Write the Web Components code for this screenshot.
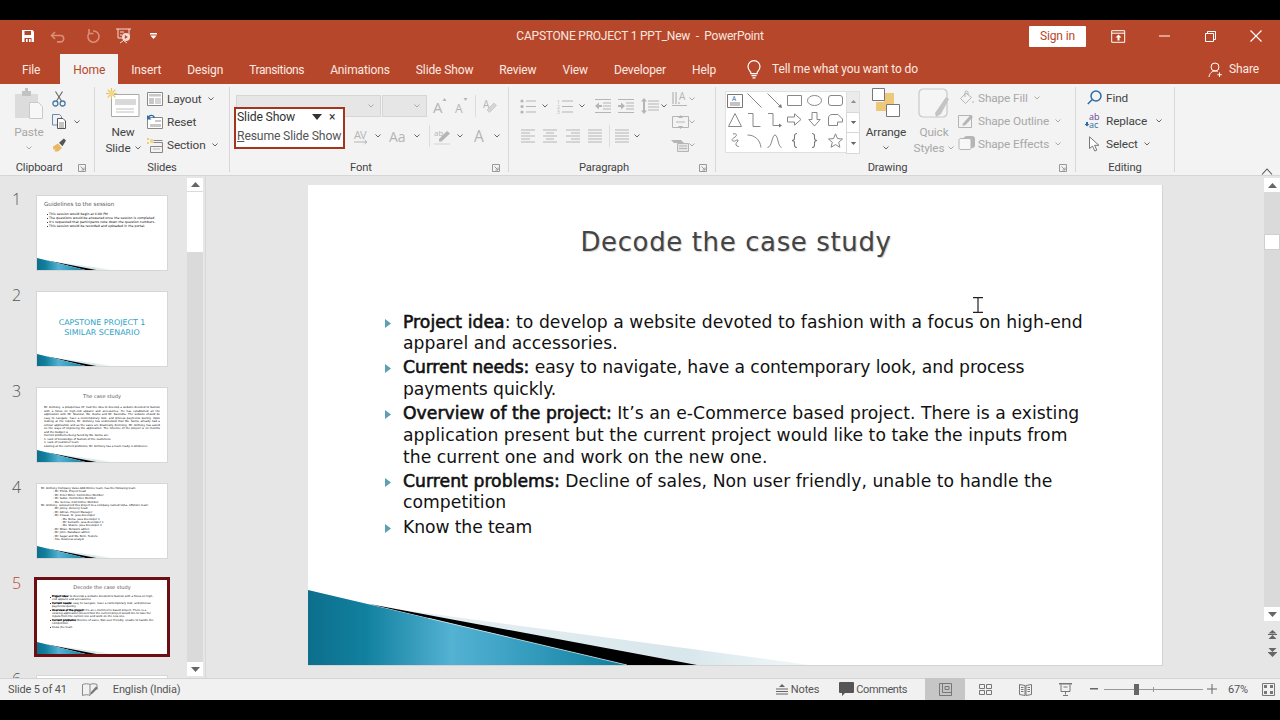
<!DOCTYPE html>
<html lang="en">
<head>
<meta charset="utf-8">
<title>CAPSTONE PROJECT 1 PPT_New - PowerPoint</title>
<style>
  html, body { margin: 0; background: #000; }
</style>
</head>
<body>
<pp-window>
  <pp-titlebar slot="top"></pp-titlebar>
  <pp-tabs slot="top"></pp-tabs>
  <pp-ribbon slot="top">
    <rb-group label="Clipboard" launcher style="width:94px">
      <rb-big icon="paste" line1="Paste" caret disabled style="width:36px;margin-left:11px"></rb-big>
      <rb-col style="margin-left:4px;margin-top:3px">
        <rb-item icon="cut"></rb-item>
        <rb-item icon="copy" caret style="--cg:3px"></rb-item>
        <rb-item icon="painter"></rb-item>
      </rb-col>
    </rb-group>
    <rb-group label="Slides" style="width:134px">
      <rb-big icon="newslide" line1="New" line2="Slide" caret style="width:38px;margin-left:9px"></rb-big>
      <rb-col style="margin-left:5px;margin-top:3px">
        <rb-item icon="layout" caret>Layout</rb-item>
        <rb-item icon="reset">Reset</rb-item>
        <rb-item icon="section" caret>Section</rb-item>
      </rb-col>
    </rb-group>
    <rb-group label="Font" launcher style="width:278px">
      <rb-col style="margin-top:11px;gap:8px">
        <rb-row>
          <rb-select style="width:145px;margin-left:6px"></rb-select>
          <rb-select style="width:45px;margin-left:1px"></rb-select>
          <pp-icon name="grow" style="margin-left:6px"></pp-icon>
          <pp-icon name="shrink" style="margin-left:8px"></pp-icon>
          <rb-sep style="margin-left:6px"></rb-sep>
          <pp-icon name="clearfmt" style="margin-left:6px"></pp-icon>
        </rb-row>
        <rb-row>
          <pp-icon name="spacing" style="margin-left:124px"></pp-icon>
          <pp-icon name="caret" style="margin-left:7px"></pp-icon>
          <pp-icon name="case" style="margin-left:8px"></pp-icon>
          <pp-icon name="caret" style="margin-left:4px"></pp-icon>
          <rb-sep style="margin-left:9px"></rb-sep>
          <pp-icon name="highlight" style="margin-left:3px"></pp-icon>
          <pp-icon name="caret" style="margin-left:6px"></pp-icon>
          <pp-icon name="fontcolor" style="margin-left:10px"></pp-icon>
          <pp-icon name="caret" style="margin-left:7px"></pp-icon>
        </rb-row>
      </rb-col>
      <pp-popup></pp-popup>
    </rb-group>
    <rb-group label="Paragraph" launcher style="width:206px">
      <rb-col style="margin-top:11px;gap:8px;margin-left:11px;width:150px">
        <rb-row>
          <pp-icon name="bullets"></pp-icon>
          <pp-icon name="caret" style="margin-left:6px"></pp-icon>
          <pp-icon name="numbers" style="margin-left:9px"></pp-icon>
          <pp-icon name="caret" style="margin-left:6px"></pp-icon>
          <pp-icon name="outdent" style="margin-left:10px"></pp-icon>
          <pp-icon name="indent" style="margin-left:7px"></pp-icon>
          <pp-icon name="linespace" style="margin-left:7px"></pp-icon>
          <pp-icon name="caret" style="margin-left:2px"></pp-icon>
        </rb-row>
        <rb-row>
          <pp-icon name="alignleft" style="margin-left:1px"></pp-icon>
          <pp-icon name="aligncenter" style="margin-left:8px"></pp-icon>
          <pp-icon name="alignright" style="margin-left:9px"></pp-icon>
          <pp-icon name="justify" style="margin-left:8px"></pp-icon>
          <rb-sep style="margin-left:7px"></rb-sep>
          <pp-icon name="columns" style="margin-left:5px"></pp-icon>
          <pp-icon name="caret" style="margin-left:5px"></pp-icon>
        </rb-row>
      </rb-col>
      <rb-col style="margin-top:3px;margin-left:2px;--cg:-3px">
        <rb-item icon="textdir" caret disabled></rb-item>
        <rb-item icon="aligntext" caret disabled></rb-item>
        <rb-item icon="smartart" caret disabled></rb-item>
      </rb-col>
    </rb-group>
    <rb-group label="Drawing" launcher style="width:359px">
      <rb-gallery style="margin-left:9px;margin-top:7px"></rb-gallery>
      <rb-big icon="arrange" line1="Arrange" caret style="width:50px;margin-left:1px"></rb-big>
      <rb-big icon="quick" line1="Quick" line2="Styles" caret disabled style="width:46px;margin-left:0"></rb-big>
      <rb-col style="margin-left:1px;margin-top:2px">
        <rb-item icon="shapefill" caret disabled>Shape Fill</rb-item>
        <rb-item icon="shapeoutline" caret disabled>Shape Outline</rb-item>
        <rb-item icon="shapeeffects" caret disabled>Shape Effects</rb-item>
      </rb-col>
    </rb-group>
    <rb-group label="Editing" style="width:98px">
      <rb-col style="margin-left:10px;margin-top:2px">
        <rb-item icon="find">Find</rb-item>
        <rb-item icon="replace" caret style="--cg:9px">Replace</rb-item>
        <rb-item icon="select" caret>Select</rb-item>
      </rb-col>
    </rb-group>
  </pp-ribbon>

  <pp-thumbs slot="left">
    <pp-thumb num="1">
      <mini-title style="text-align:left;padding:5px 0 0 7px;font-size:5.6px">Guidelines to the session</mini-title>
      <mini-list style="padding:4px 6px 0 12px;--lh:4px;--fs:3.2px">
        <mini-line>This session would begin at 6:00 PM</mini-line>
        <mini-line>The questions would be answered once the session is completed</mini-line>
        <mini-line>It's requested that participants note down the question numbers.</mini-line>
        <mini-line>This session would be recorded and uploaded in the portal.</mini-line>
      </mini-list>
    </pp-thumb>
    <pp-thumb num="2">
      <mini-heading>CAPSTONE PROJECT 1<br>SIMILAR SCENARIO</mini-heading>
    </pp-thumb>
    <pp-thumb num="3">
      <mini-title style="padding-top:5px;font-size:5px">The case study</mini-title>
      <mini-list style="padding:6px 7px 0 7px;text-align:justify;--dot:none;--lh:3.5px">
        <mini-line>Mr. Anthony, a prosperous VP, had the idea to develop a website devoted to fashion with a focus on high-end apparel and accessories. He has established all the application with Mr. Shankar, Ms. Reshu and Mr. Ravindra. The website should be easy to navigate, have a contemporary look, and process payments quickly. Upon looking at the reports, Mr. Anthony has understood that Ms. Gomu already had a similar application and as the sales are drastically declining, Mr. Anthony has asked on the ways of improving the application. The timeline of the project is 12 months and the budget is</mini-line>
        <mini-line>Current problems being faced by Ms. Gomu are:</mini-line>
        <mini-line>1. Lack of knowledge of fashion of the customers.</mini-line>
        <mini-line>2. Lack of customer team.</mini-line>
        <mini-line>Looking at the current problems, Mr. Anthony has a team ready in Ambience.</mini-line>
      </mini-list>
    </pp-thumb>
    <pp-thumb num="4">
      <mini-list style="padding:3px 6px 0 4px;--dot:none">
        <mini-line>Mr. Anthony Company Value-Add-Online team, has the following team:</mini-line>
        <mini-line style="padding-left:12px">- Mr. Philip- Project head</mini-line>
        <mini-line style="padding-left:12px">- Mr. Peter Miller- Committee Member</mini-line>
        <mini-line style="padding-left:12px">- Mr. Suboi- Committee Member</mini-line>
        <mini-line style="padding-left:12px">- Ms. Serena- Committee Member</mini-line>
        <mini-line>Mr. Anthony, outsourced this project to a company named Usha- offshore team:</mini-line>
        <mini-line style="padding-left:12px">- Mr. Johny- delivery head</mini-line>
        <mini-line style="padding-left:12px">- Mr. Adrian- Project Manager</mini-line>
        <mini-line style="padding-left:12px">- Mr. Chasai- Sr. java developer</mini-line>
        <mini-line style="padding-left:20px">- Ms. Neha- java developer 1</mini-line>
        <mini-line style="padding-left:20px">- Mr. Sumathi- java developer 2</mini-line>
        <mini-line style="padding-left:20px">- Ms. Shalini- java developer 3</mini-line>
        <mini-line style="padding-left:12px">- Mr. Milan- Network admin</mini-line>
        <mini-line style="padding-left:12px">- Mr. John- Database admin</mini-line>
        <mini-line style="padding-left:12px">- Mr. Sagar and Ms. Nehi- Testers</mini-line>
        <mini-line style="padding-left:12px">- You- Business analyst</mini-line>
      </mini-list>
    </pp-thumb>
    <pp-thumb num="5" selected>
      <mini-title style="padding-top:4px;font-size:5px">Decode the case study</mini-title>
      <mini-list style="padding:4px 11px 0 15px">
        <mini-line><b>Project idea:</b> to develop a website devoted to fashion with a focus on high-end apparel and accessories.</mini-line>
        <mini-line><b>Current needs:</b> easy to navigate, have a contemporary look, and process payments quickly.</mini-line>
        <mini-line><b>Overview of the project:</b> It's an e-Commerce based project. There is a existing application present but the current project would like to take the inputs from the current one and work on the new one.</mini-line>
        <mini-line><b>Current problems:</b> Decline of sales, Non user friendly, unable to handle the competition</mini-line>
        <mini-line>Know the team</mini-line>
      </mini-list>
    </pp-thumb>
    <pp-thumb num="6"></pp-thumb>
  </pp-thumbs>

  <pp-editor slot="main">
    <pp-slide>
      <slide-title>Decode the case study</slide-title>
      <slide-bullet><b>Project idea</b>: to develop a website devoted to fashion with a focus on <nobr>high-end</nobr> apparel and accessories.</slide-bullet>
      <slide-bullet style="letter-spacing:-.1px"><b>Current needs:</b> easy to navigate, have a contemporary look, and process payments quickly.</slide-bullet>
      <slide-bullet><b>Overview of the project:</b> It’s an e-Commerce based project. There is a existing application present but the current project would like to take the inputs from the current one and work on the new one.</slide-bullet>
      <slide-bullet><b>Current problems:</b> Decline of sales, Non user friendly, unable to handle the competition</slide-bullet>
      <slide-bullet style="letter-spacing:-.1px">Know the team</slide-bullet>
    </pp-slide>
  </pp-editor>

  <pp-status slot="bottom"></pp-status>
</pp-window>

<script>
const G = "#b5b5b5", D = "#666", B = "#4a7ba6";
const ln = (c, d, w = 1) => `<path fill="none" stroke="${c}" stroke-width="${w}" d="${d}"/>`;
const rows = (c, x, w, ys) => ln(c, ys.map(y => `M${x} ${y}h${w}`).join(""));

// [width, height, svg content]
const ICONS = {
    caret: [6, 4, ln(D, "M.5.5 3 3 5.5.5")],
    caretg: [6, 4, ln("#aaa", "M.5.5 3 3 5.5.5")],
    save: [14, 14, `<path fill="#fff" d="M1 1h10.5L13 2.5V13H1z"/><path fill="#b7472a" d="M3.5 2h6.5v4H3.5zM3.5 9h7v4h-7z"/><path fill="#fff" d="M5 10h1.6v3H5zM8 10h1.6v3H8z"/>`],
    undo: [16, 14, ln("#d98f78", "M1.5 6.5h9a3.2 3.2 0 0 1 0 6.4H7M5 3 1.5 6.5 5 10", 1.6)],
    redo: [14, 16, ln("#d98f78", "M6 3a5.6 5.6 0 1 1-4 2.2M2 1v4.5h4.5", 1.6)],
    qat: [18, 18, ln("#f5dcd3", "M1 2h15M3 2v9h11V2M8.5 11v2.5M5 16l3.5-2.5L12 16M5 5h4M5 8h2") + `<circle cx="11" cy="10" r="4" fill="#f5dcd3"/><path fill="#b7472a" d="M9.8 8v4l3-2z"/>`],
    customize: [7, 6, `<path fill="#fff" d="M0 0h7v1.4H0zM.3 2.6h6.4L3.5 6z"/>`],
    display: [15, 13, ln("#fff", "M.7.7h13v11.6H.7zM.7 3.2h13") + `<path fill="#fff" d="M7.5 4.5 4.5 7.6h2v3h2v-3h2z"/>`],
    min: [11, 2, `<path fill="#fff" d="M0 .5h11v1H0z"/>`],
    restore: [11, 11, ln("#fff", "M.5 2.5h8v8h-8zM2.5 2.5v-2h8v8h-2")],
    close: [12, 12, ln("#fff", "M.5.5l11 11M11.5.5l-11 11", 1.1)],
    bulb: [14, 19, ln("#fff", "M3.8 12.2C2.7 10.7 1 9.4 1 6.6a6 6 0 0 1 12 0c0 2.8-1.7 4.1-2.8 5.6v1.4H3.8zM4.5 15.7h5M5.5 17.8h3", 1.2)],
    person: [15, 15, ln("#fff", "M7 9a4 4 0 1 0 0-8 4 4 0 0 0 0 8zM1 15c.4-3.5 2.9-6 6-6 1 0 1.9.2 2.7.7M11.5 10.5v4.5M9.3 12.7h4.5", 1)],
    paste: [30, 32, `<path fill="#dcdcdc" d="M1 6h23v24H1z"/><path fill="#c2c2c2" d="M8 3h3V0h3v3h3v5H8z"/><path fill="#f7f7f7" stroke="#c9c9c9" d="M15.5 14.5h9l4 4v12h-13z"/>`],
    cut: [14, 16, ln(D, "M3.5 .5 9.5 10M10.5 .5 4.5 10", 1.1) + `<g fill="none" stroke="${B}" stroke-width="1.3"><circle cx="3.4" cy="12.5" r="2.5"/><circle cx="10.6" cy="12.5" r="2.5"/></g>`],
    copy: [14, 15, `<path fill="#eef2f6" stroke="#6d8cab" d="M.5.5h7l2 2v8.5h-9z"/><path fill="#fff" stroke="#555" d="M5.5 4.5h5.5l2.5 2.5v7.5h-8z"/>` + rows("#888", 7, 5, [9, 11, 13])],
    painter: [15, 14, `<path fill="#eab660" d="M1 8.5 6 5.5l4 4.5-4 3.5H2.5L3.5 11 1.5 12z"/><path fill="#555" d="M7 4.8 11.8.5l2.2 2-3.5 5.7z"/>`],
    newslide: [34, 30, `<path fill="#fff" stroke="#a9a9a9" d="M5.5 6.5h27.5v22H5.5z"/><path fill="#d9d9d9" d="M9 11h21v6H9z"/>` + rows("#c0c0c0", 10, 18, [21, 24]) + `<g stroke="#e7c463" stroke-width="1.2">${[0, 45, 90, 135].map(a => `<path transform="rotate(${a} 5.5 5.5)" d="M0 5.5h11"/>`).join("")}</g><circle cx="5.5" cy="5.5" r="2.5" fill="#f3d982"/>`],
    layout: [16, 14, `<path fill="#fff" stroke="#888" d="M.5.5h15v13H.5z"/><path fill="#c8c8c8" d="M2 2h12v2.5H2zM2 6h5v6H2z"/>` + rows("#aaa", 8, 6, [7, 9, 11])],
    reset: [16, 15, `<path fill="#fff" stroke="#888" d="M.5 3.5h15v11H.5z"/><path fill="#c8c8c8" d="M8 6h6v2H8zM3 10h11v3H3z"/>` + ln("#2b6ca8", "M1 3.5C3 .5 6.5 .8 7.5 4", 1.4) + `<path fill="#2b6ca8" d="M0 1v4.5h4.5z"/>`],
    section: [16, 16, `<path fill="#e7c463" d="M0 1h2v2H0zM0 5h2v2H0z" opacity=".8"/><path fill="#f3d982" d="M3 2h3v4H3z"/>` + ln("#888", "M6.5 3.5h9M6.5 5.5h9v10h-12v-6h12") + rows("#bbb", 6, 7, [12])],
    grow: [14, 16, `<text x="0" y="15" font-family="Open Sans" font-size="15" fill="${G}">A</text><path fill="${G}" d="M9.5 3l2-3 2 3z"/>`],
    shrink: [14, 16, `<text x="0" y="15" font-family="Open Sans" font-size="12" fill="${G}">A</text><path fill="${G}" d="M8.5 0h4l-2 3z"/>`],
    clearfmt: [14, 17, `<text x="1" y="10" font-family="Open Sans" font-size="10" fill="${G}">A</text><path fill="#d5d5d5" d="M5 12l7-7 2.5 2.5-7 7z" stroke="${G}" stroke-width=".5"/>`],
    spacing: [14, 16, `<text x="0" y="11" font-family="Open Sans" font-size="11" fill="${G}" letter-spacing="-1">AV</text>` + ln(G, "M0 14h13M10.5 12l2.5 2-2.5 2")],
    case: [21, 16, `<text x="0" y="14" font-family="Open Sans" font-size="14" fill="${G}">Aa</text>`],
    highlight: [18, 17, `<text x="1" y="8" font-family="Open Sans" font-size="8" fill="${G}">ab</text><path fill="${G}" d="M6 11 14 3l3 2.5-8.5 8H6z"/><path fill="#e3e3e3" d="M1 15h16v2H1z"/>`],
    fontcolor: [14, 16, `<text x="1" y="14" font-family="Open Sans" font-size="15.5" fill="${G}">A</text>`],
    bullets: [16, 15, `<g fill="${G}"><circle cx="2" cy="2" r="1.6"/><circle cx="2" cy="7.5" r="1.6"/><circle cx="2" cy="13" r="1.6"/></g>` + rows(G, 6, 10, [2, 7.5, 13])],
    numbers: [16, 15, `<g font-family="Open Sans" font-size="5" fill="${G}"><text y="5">1</text><text y="10">2</text><text y="15">3</text></g>` + rows(G, 5, 11, [2, 7.5, 13])],
    outdent: [16, 14, rows(G, 0, 16, [.5, 13.5]) + rows(G, 8, 8, [4, 7, 10]) + `<path fill="${G}" d="M0 7l4-3.5V6h3v2H4v2.5z"/>`],
    indent: [16, 14, rows(G, 0, 16, [.5, 13.5]) + rows(G, 8, 8, [4, 7, 10]) + `<path fill="${G}" d="M7 7 3 3.5V6H0v2h3v2.5z"/>`],
    linespace: [18, 16, rows(G, 7, 11, [3, 6, 9, 12]) + `<path fill="${G}" d="M3 0l3 3.5H4v9h2L3 16 0 12.5h2v-9H0z"/>`],
    alignleft: [14, 15, rows(G, 0, 14, [1, 7, 13]) + rows(G, 0, 9, [4, 10])],
    aligncenter: [14, 15, rows(G, 0, 14, [1, 7, 13]) + rows(G, 3, 8, [4, 10])],
    alignright: [14, 15, rows(G, 0, 14, [1, 7, 13]) + rows(G, 5, 9, [4, 10])],
    justify: [14, 15, rows(G, 0, 14, [1, 4, 7, 10, 13])],
    columns: [14, 15, rows(G, 0, 14, [1, 4, 7, 10, 13])],
    textdir: [18, 16, `<text x="8" y="9" font-family="Open Sans" font-size="10" fill="${G}">A</text>` + ln(G, "M2 1v12M5 1v12M8 11v2M1 14.5h15", 1.2)],
    aligntext: [17, 14, ln(G, "M.5 1.5h16v11H.5z", 1) + `<path fill="${G}" d="M8.5 0 6 3h5zM8.5 14 6 11h5z"/>` + rows(G, 4, 9, [7])],
    smartart: [18, 14, `<path fill="${G}" d="M0 2h10l3 3H3z"/><path fill="#e6e6e6" stroke="${G}" d="M6.5 5.5h11v8h-11z"/>` + rows(G, 8, 8, [8, 10.5])],
    arrange: [28, 29, `<path fill="#ecc878" d="M12 5h10v11H12zM4 14h10v9H4z"/><path fill="#fff" stroke="#777" d="M.5.5h12v12H.5zM14.5 16.5h13v12h-13z"/>`],
    quick: [32, 32, `<path fill="#f5f5f5" stroke="#c8c8c8" stroke-width="1.2" d="M5 1h20c2 0 4 2 4 4v20c0 2-2 4-4 4H5c-2 0-4-2-4-4V5c0-2 2-4 4-4z"/><path fill="#c4c4c4" d="M17 25l11-16 3 2-8 15-5 3z"/>`],
    shapefill: [15, 15, `<path fill="none" stroke="${G}" d="M7 3 1.5 8.5l5 5 6-6z"/><path fill="none" stroke="${G}" d="M6 7V2.5a1.5 1.5 0 0 1 3 0V5"/><circle cx="14" cy="12" r="1" fill="#ccc"/>`],
    shapeoutline: [16, 15, `<path fill="none" stroke="${G}" d="M.5 2.5h13v12H.5z"/><path fill="${G}" d="M5 10.5 12.5 2 15 4 7.5 12l-3 1z"/>`],
    shapeeffects: [17, 15, `<path fill="${G}" d="M5 3c1-2 2-3 4-3h5c2 0 3 1 3 3v6c0 2-1 3-3 3H9z"/><path fill="#f7f7f7" stroke="${G}" d="M3 2.5h8c1.5 0 2 .5 2 2v7c0 1.5-.5 2-2 2H3c-1.5 0-2-.5-2-2v-7c0-1.5.5-2 2-2z"/>`],
    find: [15, 15, ln("#2b6ca8", "M9 1a5 5 0 1 1 0 10A5 5 0 0 1 9 1zM5.3 9.5 .8 14", 1.5)],
    replace: [16, 15, `<text x="3" y="7" font-family="Open Sans" font-size="9" fill="#6a3d9a">ab</text><text x="3" y="15" font-family="Open Sans" font-size="9" fill="#2b6ca8">ac</text><path fill="#2b6ca8" d="M0 9h2v2h1.5L1 13.5-1.5 11H0z"/>`],
    select: [13, 16, `<path fill="#fff" stroke="#777" d="M1.5 .8v11.7l3-2.4 2.3 4.9 2-.9-2.2-4.8h4.3z"/>`],
    launcher: [8, 8, ln("#999", "M.5.5h7v7h-7zM2.5 2.5l3.5 3.5M6 3.5V6H3.5")],
    collapse: [12, 7, ln("#555", "M1 6.5 6 1l5 5.5", 1.1)],
    up: [9, 5, `<path fill="${D}" d="M4.5 0 9 5H0z"/>`],
    down: [9, 5, `<path fill="${D}" d="M4.5 5 9 0H0z"/>`],
    prevslide: [9, 9, `<path fill="${D}" d="M4.5 0 8.5 3.5H.5zM0 4h9v1H0zM4.5 5l4 4h-8z"/>`],
    nextslide: [9, 9, `<path fill="${D}" d="M4.5 4 .5 0h8zM0 4h9v1H0zM4.5 9l-4-4h8z"/>`],
    proof: [16, 13, ln("#888", "M8 1.5C6.5 .5 3 .5 .5 1.5v11C3 11.5 6.5 11.5 8 12.5zM8 1.5c1.5-1 4.5-1 7 0v5") + `<path fill="#777" d="M8 12l1-3 5-5.5 2 1.5-5.5 5.5z"/>`],
    notes: [12, 11, `<path fill="${D}" d="M6 0 9 3H3z"/>` + rows(D, 0, 12, [5, 7.5, 10])],
    comments: [15, 14, `<path fill="#555" d="M1 0h13a1 1 0 0 1 1 1v9a1 1 0 0 1-1 1H6l-3 3v-3H1a1 1 0 0 1-1-1V1a1 1 0 0 1 1-1z"/>`],
    normal: [13, 13, ln("#777", "M.5.5h12v12H.5zM3.5 .5v9M3.5 9.5h9M6 3.5h4v3H6z")],
    sorter: [13, 13, ln("#777", "M.5 1.5h5v4h-5zM7.5 1.5h5v4h-5zM.5 7.5h5v4h-5zM7.5 7.5h5v4h-5z")],
    reading: [13, 13, ln("#777", "M.5 1.5l5.5 1v10l-5.5-1zM12.5 1.5l-5.5 1v10l5.5-1zM2 4.5h2.5M2 6.5h2.5M2 8.5h2.5M8.5 4.5H11M8.5 6.5H11M8.5 8.5H11")],
    show: [13, 13, `<path fill="#777" d="M0 0h13v1.5H0z"/>` + ln("#777", "M2 1.5v7h9v-7M6.5 8.5v3M4 12.5h5M4.5 4h4")],
    zminus: [8, 2, `<path fill="${D}" d="M0 0h8v1.5H0z"/>`],
    zplus: [10, 10, ln(D, "M0 5h10M5 0v10")],
    fit: [13, 13, ln("#777", "M.5.5h12v12H.5z") + `<path fill="#777" d="M2 2h3v3H2zM8 2h3v3H8zM2 8h3v3H2zM8 8h3v3H8z"/>`],
    ibeam: [10, 16, ln("#222", "M0 .7h10M5 .7v14.6M0 15.3h10", 1.2)],
    tri: [6, 9, `<path fill="#5f9fb6" d="M0 0 6 4.5 0 9z"/>`],
    // drawing gallery
    textbox: [16, 14, `<path fill="#fff" stroke="#777" d="M.5.5h15v13H.5z"/><text x="5" y="7" font-family="Open Sans" font-size="6.5" fill="#2b6ca8">A</text>` + rows("#888", 3, 10, [9, 11])],
    line: [15, 15, ln("#888", "M.5.5l14 14")],
    arrow: [15, 15, ln("#888", "M.5.5l13 13") + `<path fill="#777" d="M15 15l-4-1 3-3z"/>`],
    rect: [15, 11, ln("#888", "M.5.5h14v10H.5z")],
    oval: [15, 11, `<ellipse cx="7.5" cy="5.5" rx="7" ry="5" fill="none" stroke="#888"/>`],
    rrect: [15, 11, `<rect x=".5" y=".5" width="14" height="10" rx="2.5" fill="none" stroke="#888"/>`],
    triangle: [14, 14, ln("#888", "M7 .5l6.5 13H.5z")],
    elbow: [14, 14, ln("#888", "M1 .5h5v13h7.5")],
    elbowa: [15, 14, ln("#888", "M1 .5h5v12h6") + `<path fill="#777" d="M15 12.5l-3-2v4z"/>`],
    rarrow: [15, 13, ln("#888", "M.5 4h7V.8l6.5 5.7-6.5 5.7V9h-7z")],
    darrow: [13, 15, ln("#888", "M4 .5v7H.8l5.7 6.5 5.7-6.5H9v-7z")],
    snip: [15, 12, ln("#888", "M.5 11.5V4C.5 2 2 .5 4 .5h6l4.5 4.5v3h-5v3.5z")],
    scribble: [11, 15, ln("#888", "M3 1c3-1 5 1 2 3S1 7 3 8s4-2 5-1-3 3-2 5 3 1 3 2")],
    curve: [15, 14, ln("#888", "M.5 1C7 1 13 5 14 13.5")],
    scurve: [15, 14, ln("#888", "M.5 13.5C5 13 5 1 8 1s3 12 6.5 12.5")],
    lbrace: [7, 15, ln("#777", "M6 .5C3 .5 3.5 3 3.5 5S3 7.5 1 7.5c2 0 2.5 .5 2.5 2.5S3 14.5 6 14.5", 1.1)],
    rbrace: [7, 15, ln("#777", "M1 .5C4 .5 3.5 3 3.5 5S4 7.5 6 7.5c-2 0-2.5 .5-2.5 2.5S4 14.5 1 14.5", 1.1)],
    star: [15, 15, ln("#888", "M7.5 .8l2 4.8 5 .4-3.8 3.3 1.2 5-4.4-2.7-4.4 2.7 1.2-5L.5 6l5-.4z")],
};

// attach a shadow root holding the given markup
const shadow = (el, html) => {
    el.attachShadow({ mode: "open" }).innerHTML = html;
};
const define = (tag, css, html = "<slot></slot>") => {
    customElements.define(tag, class extends HTMLElement {
        constructor() {
            super();
            shadow(this, `<style>${css}</style>${typeof html === "function" ? html(this) : html}`);
        }
    });
};

class PpIcon extends HTMLElement {
    connectedCallback() {
        const [w, h, body] = ICONS[this.getAttribute("name")];
        this.shadowRoot || this.attachShadow({ mode: "open" });
        this.shadowRoot.innerHTML = `<style>:host{display:inline-flex;flex:none;line-height:0;letter-spacing:0}svg{overflow:visible}</style>
            <svg width="${w}" height="${h}" viewBox="0 0 ${w} ${h}">${body}</svg>`;
    }
}
customElements.define("pp-icon", PpIcon);

define("pp-window", `
    :host { display: flex; flex-direction: column; width: 1280px; height: 720px; padding: 20px 0; box-sizing: border-box;
        background: #000; overflow: hidden; font: 12px Roboto, "Open Sans", sans-serif; letter-spacing: -.12px; color: #444; }
    .mid { flex: 1; display: flex; min-height: 0; background: #e6e6e6; }
`, `<slot name="top"></slot><div class="mid"><slot name="left"></slot><slot name="main"></slot></div><slot name="bottom"></slot>`);

define("pp-titlebar", `
    :host { display: flex; align-items: center; height: 32px; background: #b7472a; color: #f8e7e0; position: relative; }
    .qat { display: flex; align-items: center; padding-left: 21px; width: 480px; }
    .title { position: absolute; left: 0; right: 0; top: 9px; text-align: center; margin-left: 0; letter-spacing: -.22px; }
    .sign { margin-left: auto; width: 57px; height: 21px; background: #fff; color: #b7472a; display: flex; align-items: center; justify-content: center; border-radius: 1px; }
    .win { display: flex; align-items: center; width: 185px; margin-left: 9px; }
    .win span { width: 46px; display: flex; justify-content: center; }
`, `
    <div class="qat">
        <pp-icon name="save"></pp-icon>
        <pp-icon name="undo" style="margin-left:15px"></pp-icon>
        <pp-icon name="caret" style="margin-left:4px;opacity:.5"></pp-icon>
        <pp-icon name="redo" style="margin-left:11px"></pp-icon>
        <pp-icon name="qat" style="margin-left:14px"></pp-icon>
        <pp-icon name="customize" style="margin-left:17px"></pp-icon>
    </div>
    <div class="title">CAPSTONE PROJECT 1 PPT_New &nbsp;-&nbsp; PowerPoint</div>
    <div class="sign">Sign in</div>
    <div class="win">
        <span><pp-icon name="display"></pp-icon></span>
        <span><pp-icon name="min"></pp-icon></span>
        <span><pp-icon name="restore"></pp-icon></span>
        <span><pp-icon name="close"></pp-icon></span>
    </div>
`);

define("pp-tabs", `
    :host { display: flex; align-items: stretch; height: 32px; background: #b7472a; color: #fbeae3; padding-left: 9px; }
    .t { display: flex; align-items: center; padding: 3px 13px 0; }
    .on { background: #f3f3f3; color: #b7472a; margin: 2px 0 0 7px; padding-top: 1px; }
    .tell { display: flex; align-items: center; margin-left: 18px; gap: 11px; padding-top: 2px; }
    .share { margin-left: auto; display: flex; align-items: center; gap: 6px; padding: 2px 21px 0 0; }
`, `
    <div class="t">File</div><div class="t on">Home</div><div class="t">Insert</div><div class="t">Design</div>
    <div class="t" style="letter-spacing:-.4px">Transitions</div><div class="t">Animations</div><div class="t">Slide Show</div><div class="t">Review</div>
    <div class="t">View</div><div class="t">Developer</div><div class="t">Help</div>
    <div class="tell"><pp-icon name="bulb"></pp-icon><span>Tell me what you want to do</span></div>
    <div class="share"><pp-icon name="person"></pp-icon><span>Share</span></div>
`);

define("pp-ribbon", `
    :host { display: flex; height: 92px; box-sizing: border-box; background: #f3f3f3; border-bottom: 1px solid #d6d6d6; position: relative; font-size: 11.8px; }
    .up { margin: 80px 0 0 auto; padding-right: 7px; height: 7px; }
`, `<slot></slot><div class="up"><pp-icon name="collapse"></pp-icon></div>`);

class RbGroup extends HTMLElement {
    constructor() {
        super();
        const launcher = this.hasAttribute("launcher");
        shadow(this, `<style>
            :host { display: flex; flex-direction: column; flex: none; position: relative; box-sizing: content-box; margin-right: 1px; }
            :host::after { content: ""; position: absolute; right: -1px; top: 3px; bottom: 3px; width: 1px; background: #d8d8d8; }
            .body { flex: 1; display: flex; align-items: flex-start; min-height: 0; }
            .foot { height: 16px; display: flex; align-items: center; padding-top: 1px; box-sizing: border-box; }
            .label { flex: 1; text-align: center; font-size: 11.2px; }
            .launch { width: 16px; display: flex; }
        </style>
        <div class="body"><slot></slot></div>
        <div class="foot"><div class="label">${this.getAttribute("label")}</div>
        ${launcher ? `<div class="launch"><pp-icon name="launcher"></pp-icon></div>` : ""}</div>`);
    }
}
customElements.define("rb-group", RbGroup);

define("rb-col", `:host { display: flex; flex-direction: column; flex: none; }`);
define("rb-row", `:host { display: flex; align-items: center; height: 22px; }`);
define("rb-sep", `:host { display: block; width: 1px; height: 22px; background: #dcdcdc; flex: none; }`);
define("rb-select", `
    :host { display: flex; align-items: center; justify-content: flex-end; height: 22px; box-sizing: border-box; padding-right: 6px;
        background: #e6e6e6; border: 1px solid #d6d6d6; flex: none; }
`, `<pp-icon name="caretg"></pp-icon>`);

class RbItem extends HTMLElement {
    constructor() {
        super();
        shadow(this, `<style>
            :host { display: flex; align-items: center; height: 23px; white-space: nowrap; }
            :host([disabled]) { color: #a8a8a8; }
            .i { width: 16px; display: flex; justify-content: center; margin-right: 4px; flex: none; }
            .c { margin-left: var(--cg, 6px); }
        </style>
        <span class="i"><pp-icon name="${this.getAttribute("icon")}"></pp-icon></span><slot></slot>
        ${this.hasAttribute("caret") ? `<pp-icon class="c" name="${this.hasAttribute("disabled") ? "caretg" : "caret"}"></pp-icon>` : ""}`);
    }
}
customElements.define("rb-item", RbItem);

class RbBig extends HTMLElement {
    constructor() {
        super();
        const off = this.hasAttribute("disabled");
        const caret = `<pp-icon name="${off ? "caretg" : "caret"}"></pp-icon>`;
        const l1 = this.getAttribute("line1"), l2 = this.getAttribute("line2");
        shadow(this, `<style>
            :host { display: flex; flex-direction: column; align-items: center; flex: none; white-space: nowrap; }
            :host([disabled]) { color: #a8a8a8; }
            .ic { height: 36px; margin-top: 4px; display: flex; align-items: flex-start; justify-content: center; }
            .l { height: 16px; display: flex; align-items: center; justify-content: center; gap: 4px; }
        </style>
        <div class="ic"><pp-icon name="${this.getAttribute("icon")}"></pp-icon></div>
        <div class="l">${l1}</div>
        <div class="l">${l2 ? l2 + " " + caret : caret}</div>`);
    }
}
customElements.define("rb-big", RbBig);

define("rb-gallery", `
    :host { display: flex; flex: none; height: 62px; }
    .g { width: 121px; display: grid; grid-template-columns: 18px repeat(4, 20px) 22px; grid-template-rows: 17px 21px 21px; background: #fff; box-sizing: border-box; border: 1px solid #e0e0e0; border-right: 0; }
    .g span { display: flex; align-items: center; justify-content: center; }
    .s { width: 14px; display: flex; flex-direction: column; }
    .s span { flex: 1; display: flex; align-items: center; justify-content: center; background: #fff; border: 1px solid #d8d8d8; margin-bottom: -1px; }
    .s span:first-child { background: #e8e8e8; opacity: .7; }
`, () => `
    <div class="g">${["textbox", "line", "arrow", "rect", "oval", "rrect", "triangle", "elbow", "elbowa", "rarrow", "darrow", "snip", "scribble", "curve", "scurve", "lbrace", "rbrace", "star"]
        .map(n => `<span><pp-icon name="${n}"></pp-icon></span>`).join("")}</div>
    <div class="s"><span><pp-icon name="up" style="transform:scale(.6)"></pp-icon></span><span><pp-icon name="down" style="transform:scale(.6)"></pp-icon></span><span><pp-icon name="down" style="transform:scale(.6)"></pp-icon></span></div>
`);

define("pp-popup", `
    :host { position: absolute; left: 4px; top: 23px; width: 111px; height: 42px; box-sizing: border-box; background: #fff;
        border: 2px solid #a5341f; padding: 0 0 0 1px; color: #333; white-space: nowrap; font-size: 12.2px; letter-spacing: -.15px; z-index: 2; }
    .a { display: flex; align-items: center; height: 15px; }
    .tri { margin-left: 17px; width: 0; height: 0; border: 5px solid transparent; border-top: 6px solid #333; border-bottom: 0; }
    .x { margin-left: 7px; font-size: 12px; }
    .b { margin-top: 5px; color: #555; }
`, `
    <div class="a"><span>Slide Show</span><span class="tri"></span><span class="x">×</span></div>
    <div class="b"><u>R</u>esume Slide Show</div>
`);

define("pp-thumbs", `
    :host { display: flex; width: 206px; flex: none; box-sizing: border-box; border-right: 1px solid #d8d8d8; }
    .list { width: 187px; overflow: hidden; padding-top: 19px; box-sizing: border-box; display: flex; flex-direction: column; gap: 20px; }
    .bar { width: 16px; margin: 2px 0; background: #dadada; display: flex; flex-direction: column; }
    .btn { height: 13px; background: #fff; display: flex; align-items: center; justify-content: center; }
    .grip { height: 60px; margin-top: 1px; background: #fff; }
    .btn.end { margin-top: auto; height: 14px; }
`, `
    <div class="list"><slot></slot></div>
    <div class="bar">
        <div class="btn"><pp-icon name="up"></pp-icon></div><div class="grip"></div>
        <div class="btn end"><pp-icon name="down"></pp-icon></div>
    </div>
`);

class PpThumb extends HTMLElement {
    constructor() {
        super();
        shadow(this, `<style>
            :host { display: flex; flex: none; height: 76px; }
            .n { width: 36px; padding-left: 12px; box-sizing: border-box; font: 300 16px/9px "Open Sans", sans-serif; color: #555; }
            :host([selected]) .n { color: #b7472a; }
            .s { width: 132px; height: 76px; box-sizing: border-box; background: #fff; border: 1px solid #d6d6d6; display: flex; flex-direction: column; overflow: hidden; flex: none; }
            :host([selected]) .s { outline: 3px solid #6b0f14; outline-offset: -1px; border: 0; padding: 1px; }
            pp-swoosh { margin-top: auto; height: 12px; flex: none; }
        </style>
        <div class="n">${this.getAttribute("num")}</div>
        <div class="s"><slot></slot><pp-swoosh></pp-swoosh></div>`);
    }
}
customElements.define("pp-thumb", PpThumb);

define("mini-title", `:host { display: block; text-align: center; color: #555; font-family: "DejaVu Sans", sans-serif; letter-spacing: 0; line-height: 7px; white-space: nowrap; }`);
define("mini-list", `:host { display: block; color: #000; font: var(--fs, 2.65px)/var(--lh, 3.4px) "DejaVu Sans", sans-serif; letter-spacing: .03px; }`);
define("mini-line", `
    :host { display: block; position: relative; }
    :host::before { content: ""; position: absolute; left: -2px; top: 1.5px; width: 1px; height: 1px; background: var(--dot, #333); }
    ::slotted(b) { font-weight: normal; -webkit-text-stroke: .22px #000; }
`);
define("mini-heading", `:host { display: block; text-align: center; color: #2ba3c4; font: 7.9px/10px "DejaVu Sans", sans-serif; letter-spacing: 0; padding-top: 26px; }`);

let swooshCount = 0;
class PpSwoosh extends HTMLElement {
    constructor() {
        super();
        const id = "g" + (swooshCount++);
        shadow(this, `<style>:host{display:block;line-height:0}svg{width:100%;height:100%;display:block}</style>
        <svg viewBox="0 0 854 76" preserveAspectRatio="none">
            <defs>
                <linearGradient id="${id}t" x1="0" x2="319" y1="0" y2="0" gradientUnits="userSpaceOnUse">
                    <stop offset="0" stop-color="#0c6f8c"/><stop offset=".18" stop-color="#11809f"/>
                    <stop offset=".45" stop-color="#54b2d3"/><stop offset=".62" stop-color="#3ea3c5"/><stop offset="1" stop-color="#0e7d9b"/>
                </linearGradient>
                <linearGradient id="${id}l" x1="90" x2="502" y1="0" y2="0" gradientUnits="userSpaceOnUse">
                    <stop offset="0" stop-color="#e8f0f3"/><stop offset=".7" stop-color="#d8e7ec"/><stop offset="1" stop-color="#f3f8f9"/>
                </linearGradient>
            </defs>
            <path fill="url(#${id}l)" d="M90 19.5 502 76H380z"/>
            <path fill="#000" d="M60 14 389 76H319z"/>
            <path fill="url(#${id}t)" d="M0 0 319 76H0z"/>
            <path fill="none" stroke="#cfe4ea" stroke-width=".7" d="M120 28.5 319 76"/>
        </svg>`);
    }
}
customElements.define("pp-swoosh", PpSwoosh);

define("pp-editor", `
    :host { flex: 1; display: flex; min-width: 0; position: relative; }
    .stage { flex: 1; padding: 9px 0 0 102px; }
    .bar { width: 16px; display: flex; flex-direction: column; align-items: stretch; }
    .track { height: 443px; margin-top: 2px; background: #dadada; display: flex; flex-direction: column; }
    .btn { height: 14px; background: #fff; display: flex; align-items: center; justify-content: center; }
    .grip { height: 16px; margin-top: 42px; background: #fff; border: 1px solid #cfcfcf; box-sizing: border-box; }
    .btn.end { margin-top: auto; }
    .jump { display: flex; justify-content: center; margin-top: 9px; }
    .cursor { position: absolute; left: 767px; top: 121px; }
`, `
    <div class="stage"><slot></slot></div>
    <div class="bar">
        <div class="track">
            <div class="btn"><pp-icon name="up"></pp-icon></div><div class="grip"></div>
            <div class="btn end"><pp-icon name="down"></pp-icon></div>
        </div>
        <div class="jump"><pp-icon name="prevslide"></pp-icon></div>
        <div class="jump"><pp-icon name="nextslide"></pp-icon></div>
    </div>
    <pp-icon class="cursor" name="ibeam"></pp-icon>
`);

define("pp-slide", `
    :host { display: flex; flex-direction: column; width: 855px; height: 481px; box-sizing: border-box; background: #fff;
        border: 1px solid #d4d4d4; border-width: 0 1px 1px 0; font: 17.2px "DejaVu Sans", sans-serif; letter-spacing: .05px; color: #111; overflow: hidden; }
    .body { flex: 1; min-height: 0; }
    pp-swoosh { flex: none; height: 75px; }
`, `<div class="body"><slot></slot></div><pp-swoosh></pp-swoosh>`);

define("slide-title", `
    :host { display: block; text-align: center; padding: 42px 0 0 2px; margin-bottom: 54.6px; font-size: 26px; letter-spacing: .62px; line-height: 30px; color: #444; text-shadow: 1px 1px 1px #ccc; }
`);
define("slide-bullet", `
    :host { display: flex; padding-left: 77px; width: 786px; box-sizing: border-box; line-height: 21.6px; margin-bottom: 2.7px; }
    .m { flex: none; width: 18px; padding-top: 7px; line-height: 0; }
    ::slotted(b) { font-weight: normal; -webkit-text-stroke: .6px #111; }
`, `<span class="m"><pp-icon name="tri"></pp-icon></span><span><slot></slot></span>`);

define("pp-status", `
    :host { display: flex; align-items: center; height: 22px; box-sizing: border-box; background: #f1f1f1; border-top: 1px solid #d4d4d4; padding: 0 0 1px 8px; font-size: 11px; letter-spacing: -.15px; color: #555; white-space: nowrap; }
    .r { margin-left: auto; display: flex; align-items: center; height: 22px; }
    .v { width: 40px; height: 100%; display: flex; align-items: center; justify-content: center; }
    .on { background: #c6c6c6; }
    .slider { width: 99px; height: 1px; background: #999; position: relative; margin-left: 6px; }
    .slider i { position: absolute; left: 30px; top: -5px; width: 5px; height: 11px; background: #666; }
    .slider b { position: absolute; left: 49px; top: -2px; width: 1px; height: 5px; background: #999; }
`, `
    <span>Slide 5 of 41</span>
    <pp-icon name="proof" style="margin-left:15px"></pp-icon>
    <span style="margin-left:15px">English (India)</span>
    <div class="r">
        <pp-icon name="notes"></pp-icon><span style="margin-left:3px">Notes</span>
        <pp-icon name="comments" style="margin-left:20px"></pp-icon><span style="margin-left:2px;letter-spacing:-.4px">Comments</span>
        <div class="v on" style="margin-left:18px"><pp-icon name="normal"></pp-icon></div>
        <div class="v"><pp-icon name="sorter"></pp-icon></div>
        <div class="v"><pp-icon name="reading"></pp-icon></div>
        <div class="v"><pp-icon name="show"></pp-icon></div>
        <pp-icon name="zminus" style="margin-left:5px"></pp-icon>
        <div class="slider"><i></i><b></b></div>
        <pp-icon name="zplus" style="margin-left:4px"></pp-icon>
        <span style="margin-left:11px">67%</span>
        <pp-icon name="fit" style="margin-left:14px;margin-right:5px"></pp-icon>
    </div>
`);
</script>
</body>
</html>
